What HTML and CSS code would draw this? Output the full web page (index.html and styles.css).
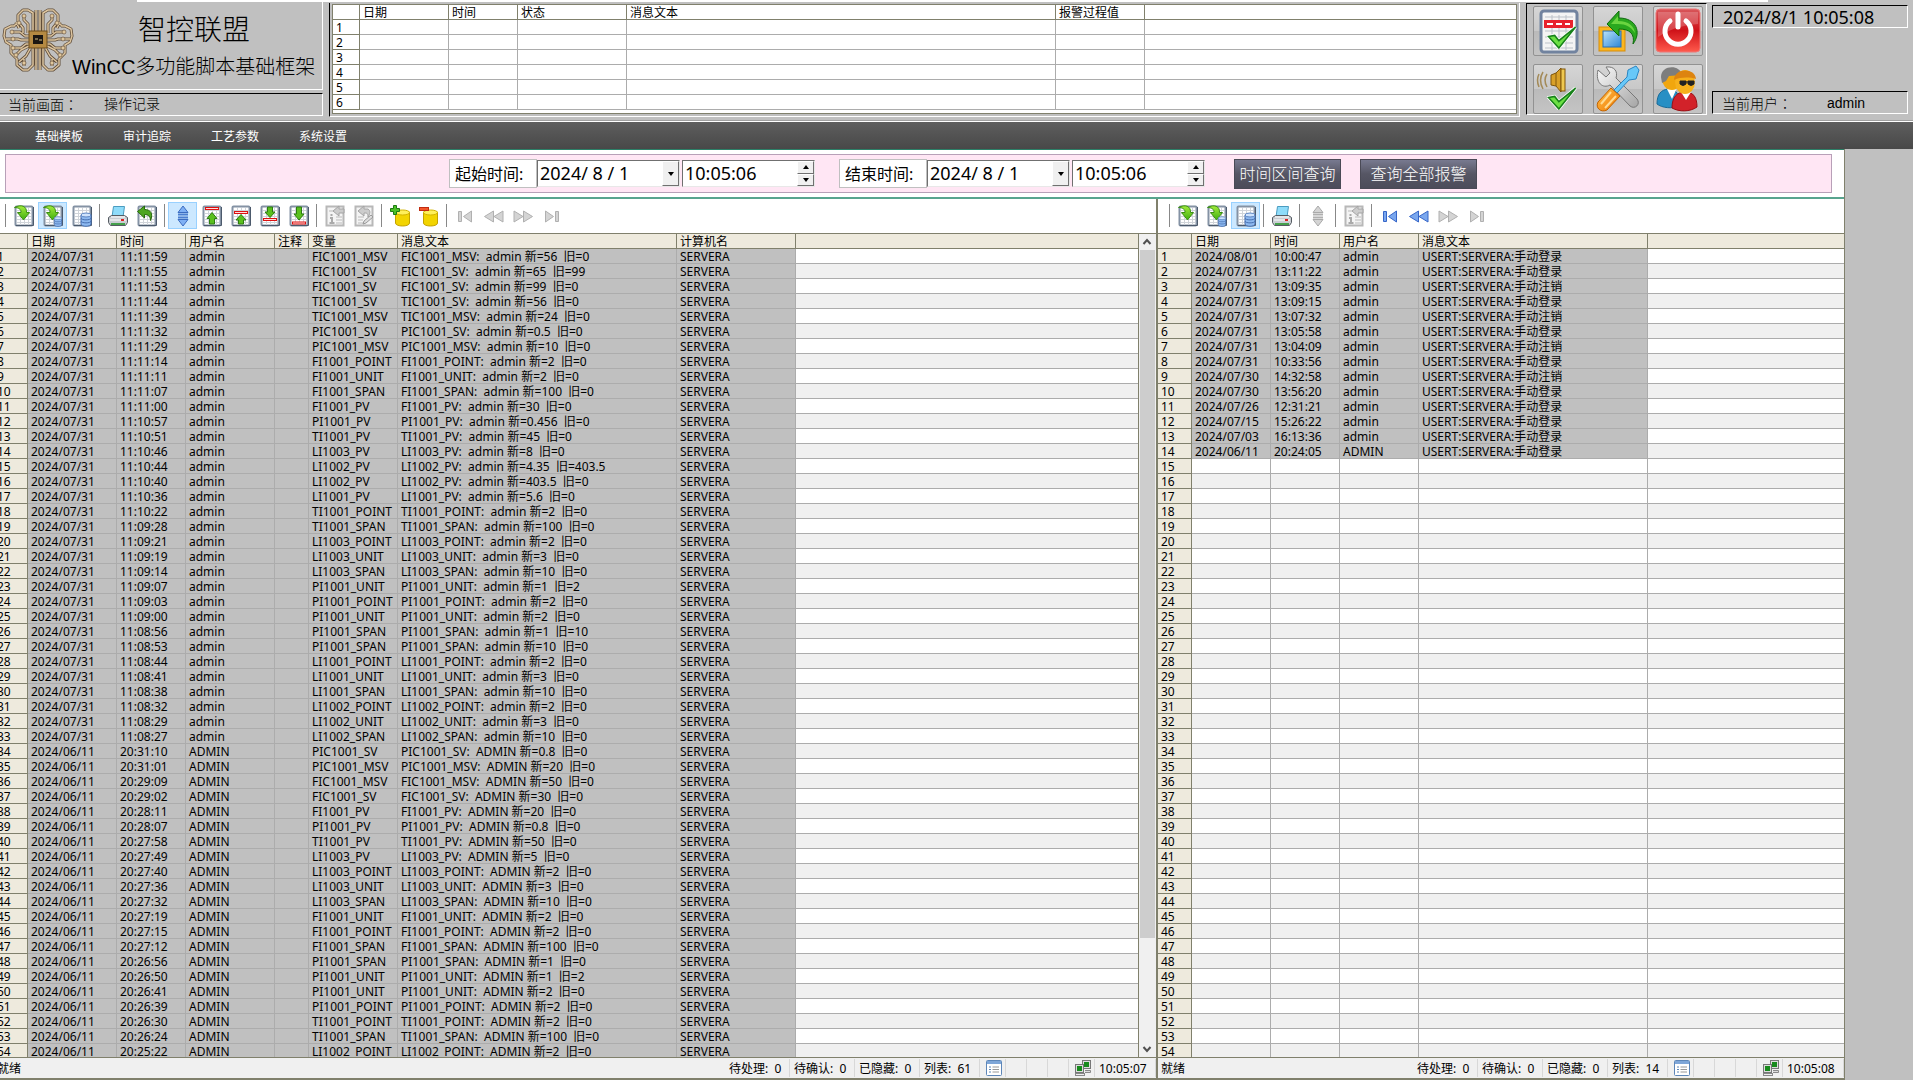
FILE: index.html
```html
<!DOCTYPE html>
<html lang="zh-CN">
<head>
<meta charset="UTF-8">
<title>操作记录</title>
<link rel="stylesheet" href="styles.css">
</head>
<body>

<svg class="defs" width="0" height="0" aria-hidden="true">
    <defs>
        <linearGradient id="g-green" x1="0" y1="0" x2="0" y2="1">
            <stop offset="0" stop-color="#a4ec3c"/><stop offset="1" stop-color="#3fae10"/>
        </linearGradient>
        <linearGradient id="g-red" x1="0" y1="0" x2="0" y2="1">
            <stop offset="0" stop-color="#d8575b"/><stop offset=".5" stop-color="#cf1219"/><stop offset="1" stop-color="#ff5a4c"/>
        </linearGradient>
        <linearGradient id="g-blue" x1="0" y1="0" x2="1" y2="1">
            <stop offset="0" stop-color="#b9e2fb"/><stop offset="1" stop-color="#2c87d6"/>
        </linearGradient>
        <linearGradient id="g-orange" x1="0" y1="0" x2="1" y2="1">
            <stop offset="0" stop-color="#ffc04a"/><stop offset="1" stop-color="#f07800"/>
        </linearGradient>
        <linearGradient id="g-steel" x1="0" y1="0" x2="1" y2="1">
            <stop offset="0" stop-color="#fafafa"/><stop offset="1" stop-color="#a5a5a5"/>
        </linearGradient>
    </defs>

    <symbol id="sheet" viewBox="0 0 20 22">
        <rect x="1.500" y="1.500" width="17" height="19" rx="1" fill="#fff" stroke="#8492a4" stroke-width="2"/>
        <path d="M3 5.500h14M3 8.500h14M3 11.500h14M3 14.500h14M3 17.500h14M6.500 3v17M10.500 3v17M14.500 3v17" stroke="#d0d4d9" fill="none"/>
        <path d="M2 20.500h17.500V2" stroke="#4c5a6c" fill="none"/>
    </symbol>
    <symbol id="db" viewBox="0 0 12 15">
        <path d="M1 3v9c0 3 10 3 10 0V3z" fill="#8db9f0" stroke="#466fb0"/>
        <path d="M1 6c0 2.500 10 2.500 10 0M1 9c0 2.500 10 2.500 10 0" fill="none" stroke="#466fb0"/>
        <ellipse cx="6" cy="3" rx="5" ry="2" fill="#cfe3fc" stroke="#5d86c4"/>
    </symbol>
    <symbol id="curve" viewBox="0 0 16 16">
        <path d="M.5 2.500C7-1 13 1 12.500 7.500h3L9.500 15 3.500 7.500H7C7.500 4.500 4.500 2.500.5 2.500z" fill="url(#g-green)" stroke="#3b8f14"/>
    </symbol>
    <symbol id="i-open" viewBox="0 0 20 22">
        <use href="#sheet"/><use href="#curve" x="0" y="0" width="16" height="16"/>
    </symbol>
    <symbol id="i-short" viewBox="0 0 20 22">
        <use href="#sheet"/><use href="#curve" x="0" y="0" width="16" height="16"/><use href="#db" x="10" y="11" width="10" height="11"/>
    </symbol>
    <symbol id="i-long" viewBox="0 0 20 22">
        <use href="#sheet"/><use href="#db" x="8" y="7" width="12" height="15"/>
    </symbol>
    <symbol id="i-print" viewBox="0 0 20 22">
        <path d="M4 12L5.500 1.500h11L15 12z" fill="#8fdcfa" stroke="#4b9cc0"/>
        <path d="M.5 12.500l3-2h13l3 2v5l-2 3H2.500l-2-3z" fill="#c9cdd2" stroke="#555b62"/>
        <path d="M3 12h14M2 15h16" stroke="#fff"/><path d="M3 19h14" stroke="#45a04c" stroke-width="2"/>
        <rect x="13" y="14" width="3" height="2" fill="#d22"/>
    </symbol>
    <symbol id="i-back" viewBox="0 0 20 22">
        <use href="#sheet"/><path d="M.5 6.500l7-5.500v3.500c6 0 9 4 6 11 0-4-2-6-6-6V13z" fill="#4ea622" stroke="#276a0b"/>
    </symbol>
    <symbol id="i-scroll" viewBox="0 0 20 22">
        <path d="M10 1l5 6.500H5zM10 21l5-6.500H5z" fill="#7fb0f4" stroke="#3c6cc0"/><path d="M5 9.500h10M5 12.500h10" stroke="#4c7fd0" stroke-width="2"/>
    </symbol>
    <symbol id="i-scroll-off" viewBox="0 0 20 22">
        <path d="M10 1l5 6.500H5zM10 21l5-6.500H5z" fill="#d4d4d4" stroke="#aaa"/><path d="M5 9.500h10M5 12.500h10" stroke="#b0b0b0" stroke-width="2"/>
    </symbol>
    <symbol id="i-first" viewBox="0 0 20 22">
        <use href="#sheet"/><rect x="3.500" y="2.500" width="13" height="2" fill="#fdd" stroke="#d11"/>
        <path d="M10 7.500l5 6h-2.500V19h-5v-5.500H5z" fill="#5bc01e" stroke="#2c7c10"/>
    </symbol>
    <symbol id="i-prev" viewBox="0 0 20 22">
        <use href="#sheet"/><rect x="3.500" y="6.500" width="13" height="2" fill="#fdd" stroke="#d11"/>
        <path d="M10 9.500l5 5.500h-2.500v4h-5v-4H5z" fill="#5bc01e" stroke="#2c7c10"/>
    </symbol>
    <symbol id="i-next" viewBox="0 0 20 22">
        <use href="#sheet"/><rect x="3.500" y="13.500" width="13" height="2" fill="#fdd" stroke="#d11"/>
        <path d="M10 12.500l5-5.500h-2.500V2h-5v5H5z" fill="#5bc01e" stroke="#2c7c10"/>
    </symbol>
    <symbol id="i-last" viewBox="0 0 20 22">
        <use href="#sheet"/><rect x="3.500" y="17" width="13" height="2" fill="#fdd" stroke="#d11"/>
        <path d="M10 15l5-6h-2.500V2h-5v7H5z" fill="#5bc01e" stroke="#2c7c10"/>
    </symbol>
    <symbol id="i-info" viewBox="0 0 20 22">
        <rect x="1.500" y="1.500" width="17" height="19" fill="#f4f4f4" stroke="#b8b8b8" stroke-width="2"/>
        <path d="M4 6h4M11 12h6M11 15h6M11 18h6" stroke="#bbb"/><path d="M6.500 9v2M5 13h2v5M4.500 18h5" stroke="#aaa" stroke-width="2" fill="none"/>
        <path d="M8 6l6-5v3h5v4h-5v3z" fill="#ccc" stroke="#a4a4a4"/>
    </symbol>
    <symbol id="i-edit" viewBox="0 0 20 22">
        <rect x="1.500" y="1.500" width="17" height="19" fill="#f4f4f4" stroke="#b8b8b8" stroke-width="2"/>
        <path d="M4 12h6M4 15h5M4 18h5" stroke="#bbb"/><path d="M4 6l6-5v3h4c3 2 2 5 0 8 0-4-1-4-4-4v3z" fill="#ccc" stroke="#a4a4a4"/>
        <path d="M9 19l1-3 7-6 2 2-7 6z" fill="#ddd" stroke="#999"/>
    </symbol>
    <symbol id="i-lock" viewBox="0 0 20 22">
        <path d="M5.500 7v11c0 4 14 4 14 0V7z" fill="#f2d400" stroke="#c4a200"/><ellipse cx="12.500" cy="7.500" rx="7" ry="2.500" fill="#fff05a" stroke="#d3b400"/>
        <path d="M3.500.5h3v3h3v3h-3v3h-3v-3h-3v-3h3z" fill="#4bc126" stroke="#1d7a12"/>
    </symbol>
    <symbol id="i-unlock" viewBox="0 0 20 22">
        <path d="M4.500 7v11c0 4 14 4 14 0V7z" fill="#f2d400" stroke="#c4a200"/><ellipse cx="11.500" cy="7.500" rx="7" ry="2.500" fill="#fff05a" stroke="#d3b400"/>
        <rect x=".5" y="2.500" width="9" height="3" fill="#f2552a" stroke="#c02c10"/>
    </symbol>
    <symbol id="n-first" viewBox="0 0 20 22"><path d="M3.500 6.500h3v10h-3zM16.500 6v11l-8-5.500z" stroke-linejoin="round"/></symbol>
    <symbol id="n-prev" viewBox="0 0 20 22"><path d="M9.500 6v11l-9-5.500zM19 6v11l-9-5.500z" stroke-linejoin="round"/></symbol>
    <symbol id="n-next" viewBox="0 0 20 22"><path d="M10.500 6v11l9-5.500zM1 6v11l9-5.500z" stroke-linejoin="round"/></symbol>
    <symbol id="n-last" viewBox="0 0 20 22"><path d="M16.500 6.500h-3v10h3zM3.500 6v11l8-5.500z" stroke-linejoin="round"/></symbol>
    <symbol id="s-list" viewBox="0 0 16 16">
        <rect x=".5" y=".5" width="15" height="15" rx="1" fill="#fff" stroke="#5d86b8"/><path d="M1 2.500h14" stroke="#7ea6d8" stroke-width="3"/>
        <path d="M3 7h2M3 9.500h2M3 12h2" stroke="#5d86b8"/><path d="M6.500 7H13M6.500 9.500H13M6.500 12H13" stroke="#999"/>
    </symbol>
    <symbol id="s-net" viewBox="0 0 16 16">
        <rect x="7.500" y=".5" width="8" height="8" fill="#ddd" stroke="#777"/><rect x="9" y="2" width="5" height="5" fill="#178a1c"/><path d="M10 10.500h5.500v2H10" fill="#ddd" stroke="#888"/>
        <rect x=".5" y="4.500" width="8" height="8" fill="#ddd" stroke="#777"/><rect x="2" y="6" width="5" height="5" fill="#178a1c"/><rect x=".5" y="13.500" width="9" height="2" fill="#eee" stroke="#888"/>
    </symbol>
    <symbol id="check" viewBox="0 0 28 22">
        <path d="M1 10l6-1 4 5L27 1 11 21z" fill="#5fe03c" stroke="#fff" stroke-width="3"/><path d="M1 10l6-1 4 5L27 1 11 21z" fill="#6be044" stroke="#17811a" stroke-width="1.500"/>
    </symbol>
</svg>

<header class="header">
    <section class="brand">
        <div class="brand-title">
            <svg class="logo" viewBox="0 0 72 64">
                <defs>
                    <path id="trace" d="M34 2v22M34 62V38M31 24V5l-5-3h-5l-5 5v7l-4 4M31 40v17l-5 5h-5l-6-5v-6l-6-6v-8l-5-3-2-6 1-7 6-3h4M17 20l-3-6M22 7v5l4 4v9M17 15l4 5v5M10 24h8l5 4h6M4 31h12l3 1h9M10 40h9l5-4h5M13 48l6-6 8-4M17 54l7-6 4-7M22 58v-7"/>
                </defs>
                <g id="lobe">
                    <g fill="none" stroke-linejoin="round">
                        <use href="#trace" stroke="#5f4c38" stroke-width="3"/>
                        <use href="#trace" stroke="#dcc49e" stroke-width="1.500"/>
                    </g>
                    <g fill="#e0c79c" stroke="#5f4c38" stroke-width=".6"><circle cx="22" cy="8" r="2"/><circle cx="17" cy="15" r="2"/><circle cx="10" cy="24" r="2"/><circle cx="11" cy="31" r="2"/><circle cx="11" cy="40" r="2"/><circle cx="14" cy="47" r="2"/><circle cx="22" cy="55" r="2"/></g>
                </g>
                <use href="#lobe" transform="matrix(-1 0 0 1 72 0)"/>
                <rect x="27" y="23" width="18" height="17" fill="#b58a42" stroke="#6c4c1c"/>
                <rect x="31" y="27" width="10" height="9" fill="#1b1712"/><path d="M33 31h3M37 32h3" stroke="#d9bf84"/>
            </svg>
            <div class="brand-text">
                <h1>智控联盟</h1>
                <h2>WinCC多功能脚本基础框架</h2>
            </div>
        </div>
        <div class="brand-page"><span>当前画面<span class="colon" lang="zh-TW">：</span></span><span>操作记录</span></div>
    </section>

    <section class="alarm">
        <div class="alarm-view">
            <table class="grid grid-alarm" id="alarm_table">
                <colgroup><col class="w27"><col class="w89"><col class="w69"><col class="w109"><col class="w429"><col class="w89"><col></colgroup>
                <thead><tr><th></th><th>日期</th><th>时间</th><th>状态</th><th>消息文本</th><th>报警过程值</th><th></th></tr></thead>
                <tbody></tbody>
            </table>
        </div>
    </section>

    <section class="tools">
        <button type="button" aria-label="报警确认"><svg viewBox="0 0 48 48">
            <rect x="7" y="4" width="36" height="41" rx="3" fill="#f4f4f4" stroke="#71839f" stroke-width="3"/>
            <path d="M11 10h28M11 24h28M11 30h28M11 36h28M11 41h28M18 8v35M25 8v35M32 8v35" stroke="#bcc2c9"/>
            <rect x="10" y="13" width="29" height="8" fill="#e8222c"/><path d="M13 17h23" stroke="#fff" stroke-width="2" stroke-dasharray="6 3"/>
            <use href="#check" x="13" y="19" width="30" height="23"/></svg></button>
        <button type="button" aria-label="返回"><svg viewBox="0 0 48 48">
            <rect x="5" y="20" width="26" height="24" fill="#fbb61e" stroke="#d78d0a"/><rect x="9" y="24" width="18" height="16" fill="url(#g-blue)" stroke="#2b6fb0"/>
            <path d="M13 17L25 4v7c17 0 23 14 14 26 2-10-3-15-14-15v7z" fill="#2aa81e" stroke="#0d6b0c"/><path d="M17 17l7-8v5c11 0 16 5 17 12-4-6-9-9-17-9z" fill="#6bd540"/></svg></button>
        <button type="button" aria-label="退出"><svg viewBox="0 0 48 48">
            <rect x="2" y="2" width="44" height="43" rx="4" fill="url(#g-red)" stroke="#e77"/><path d="M4 5h40v12Q22 18 4 30z" fill="#fff" opacity=".2"/>
            <path d="M16 14a13 13 0 1 0 16 0M24 7v13" fill="none" stroke="#fff" stroke-width="5" stroke-linecap="round"/></svg></button>
        <button type="button" aria-label="消音"><svg viewBox="0 0 48 48">
            <path d="M17 10l5-2 5-5v24l-5-6-5-1z" fill="#d8a028" stroke="#80560a"/><path d="M22 8v13" stroke="#80560a"/><rect x="27" y="4" width="4" height="22" fill="#efc850" stroke="#80560a"/>
            <path d="M13 9q-4 6 0 13M9 7q-5 8 0 17M5 9q-3 6 0 13" fill="none" stroke="#a38a58" stroke-width="1.500"/>
            <use href="#check" x="13" y="22" width="30" height="23"/></svg></button>
        <button type="button" aria-label="设置"><svg viewBox="0 0 48 48">
            <path d="M4 5l8 7 4-4-4-6c9-1 12 5 10 11l21 21c4 5-2 11-7 7L16 20C9 24 1 18 4 5z" fill="url(#g-steel)" stroke="#777"/>
            <path d="M20 25l13-13 1-7 8-4 3 4-3 9-7 1-12 13z" fill="#68c8f8" stroke="#2a86c4"/>
            <path d="M17 23l9 8-13 14c-6 3-12-2-9-8z" fill="url(#g-orange)" stroke="#c46400"/><path d="M17 27L7 39M22 31L11 43" stroke="#ffdb92" stroke-width="2"/></svg></button>
        <button type="button" aria-label="用户"><svg viewBox="0 0 48 48">
            <path d="M3 39c0-10 4-14 11-15 8 0 12 5 12 17-8 3-18 2-23-2z" fill="#278fc4" stroke="#186a98"/><path d="M13 24l5 10 5-11z" fill="#fff"/>
            <ellipse cx="18" cy="14" rx="10" ry="11" fill="#f1a60e"/><path d="M7 12C7 0 26-1 28 10l-13 1-3 5-4 2z" fill="#7d7d7d"/>
            <path d="M18 43c0-11 5-16 13-16 9 0 12 6 12 15-7 5-18 5-25 1z" fill="#d2222a" stroke="#9c1015"/><path d="M27 27l5 8 5-8z" fill="#fff"/>
            <ellipse cx="31" cy="17" rx="10" ry="12" fill="#f6b01c"/><path d="M20 15C20 3 41 2 42 14c-7-2-15-2-22 1z" fill="#dd8410"/>
            <path d="M26 16h6v3q-3 3-6 0zM34 16h6v3q-3 3-6 0zM31 17h4" fill="#222" stroke="#222"/></svg></button>
    </section>

    <section class="info">
        <div class="info-time">2024/8/1 10:05:08</div>
        <div class="info-user"><span>当前用户<span class="colon" lang="zh-TW">：</span></span><span>admin</span></div>
    </section>
</header>

<nav class="menu">
    <button type="button">基础模板</button>
    <button type="button">审计追踪</button>
    <button type="button">工艺参数</button>
    <button type="button">系统设置</button>
</nav>

<main class="main">
    <form class="query">
        <div class="query-panel">
            <div class="range">
                <label for="start_date">起始时间:</label>
                <div class="field date"><input id="start_date" type="text" value="2024/ 8 / 1"><button type="button" aria-label="选择日期"><i class="down"></i></button></div>
                <div class="field time"><input type="text" aria-label="起始时刻" value="10:05:06"><div class="spin"><button type="button" aria-label="增加"><i class="up"></i></button><button type="button" aria-label="减少"><i class="down"></i></button></div></div>
            </div>
            <div class="range">
                <label for="end_date">结束时间:</label>
                <div class="field date"><input id="end_date" type="text" value="2024/ 8 / 1"><button type="button" aria-label="选择日期"><i class="down"></i></button></div>
                <div class="field time"><input type="text" aria-label="结束时刻" value="10:05:06"><div class="spin"><button type="button" aria-label="增加"><i class="up"></i></button><button type="button" aria-label="减少"><i class="down"></i></button></div></div>
            </div>
            <button type="button" class="search">时间区间查询</button>
            <button type="button" class="search wide">查询全部报警</button>
        </div>
    </form>

    <div class="panels">
        <section class="panel panel-left">
            <div class="toolbar">
                <div class="group"><button type="button" aria-label="消息列表"><svg><use href="#i-open"/></svg></button><button type="button" class="active" aria-label="短期归档"><svg><use href="#i-short"/></svg></button><button type="button" aria-label="长期归档"><svg><use href="#i-long"/></svg></button></div>
                <div class="group"><button type="button" aria-label="打印"><svg><use href="#i-print"/></svg></button><button type="button" aria-label="返回"><svg><use href="#i-back"/></svg></button></div>
                <div class="group"><button type="button" class="active" aria-label="自动滚动"><svg><use href="#i-scroll"/></svg></button><button type="button" aria-label="第一条"><svg><use href="#i-first"/></svg></button><button type="button" aria-label="上一条"><svg><use href="#i-prev"/></svg></button><button type="button" aria-label="下一条"><svg><use href="#i-next"/></svg></button><button type="button" aria-label="最后一条"><svg><use href="#i-last"/></svg></button></div>
                <div class="group"><button type="button" disabled aria-label="信息"><svg><use href="#i-info"/></svg></button><button type="button" disabled aria-label="注释"><svg><use href="#i-edit"/></svg></button></div>
                <div class="group"><button type="button" aria-label="锁定"><svg><use href="#i-lock"/></svg></button><button type="button" aria-label="解锁"><svg><use href="#i-unlock"/></svg></button></div>
                <div class="group nav"><button type="button" disabled aria-label="首页"><svg><use href="#n-first"/></svg></button><button type="button" disabled aria-label="上一页"><svg><use href="#n-prev"/></svg></button><button type="button" disabled aria-label="下一页"><svg><use href="#n-next"/></svg></button><button type="button" disabled aria-label="末页"><svg><use href="#n-last"/></svg></button></div>
            </div>
            <div class="view">
                <div class="view-rows">
                    <table class="grid" id="operation_table">
                        <colgroup><col class="w34"><col class="w89"><col class="w69"><col class="w89"><col class="w34"><col class="w89"><col class="w279"><col class="w119"><col></colgroup>
                        <thead><tr><th></th><th>日期</th><th>时间</th><th>用户名</th><th>注释</th><th>变量</th><th>消息文本</th><th>计算机名</th><th></th></tr></thead>
                        <tbody></tbody>
                    </table>
                </div>
                <div class="scrollbar">
                    <svg viewBox="0 0 16 16"><path d="M4.500 10L8 6l3.500 4" fill="none" stroke="#505050" stroke-width="2"/></svg>
                    <div class="track"><div class="thumb"></div></div>
                    <svg viewBox="0 0 16 16"><path d="M4.500 6L8 10l3.500-4" fill="none" stroke="#505050" stroke-width="2"/></svg>
                </div>
            </div>
            <div class="status">
                <span class="ready">就绪</span><span class="c65">待处理:  0</span><span class="c65">待确认:  0</span><span class="c65">已隐藏:  0</span><span class="c60">列表:  61</span>
                <span class="c26"><svg><use href="#s-list"/></svg></span><span class="c21"></span><span class="c21"></span><span class="c21"></span><span class="c26"><svg><use href="#s-net"/></svg></span><span class="c61">10:05:07</span>
            </div>
        </section>

        <section class="panel panel-right">
            <div class="toolbar">
                <div class="group"><button type="button" aria-label="消息列表"><svg><use href="#i-open"/></svg></button><button type="button" aria-label="短期归档"><svg><use href="#i-short"/></svg></button><button type="button" class="active" aria-label="长期归档"><svg><use href="#i-long"/></svg></button></div>
                <div class="group"><button type="button" aria-label="打印"><svg><use href="#i-print"/></svg></button></div>
                <div class="group"><button type="button" disabled aria-label="自动滚动"><svg><use href="#i-scroll-off"/></svg></button></div>
                <div class="group"><button type="button" disabled aria-label="信息"><svg><use href="#i-info"/></svg></button></div>
                <div class="group nav"><button type="button" aria-label="首页"><svg><use href="#n-first"/></svg></button><button type="button" aria-label="上一页"><svg><use href="#n-prev"/></svg></button><button type="button" disabled aria-label="下一页"><svg><use href="#n-next"/></svg></button><button type="button" disabled aria-label="末页"><svg><use href="#n-last"/></svg></button></div>
            </div>
            <div class="view">
                <div class="view-rows">
                    <table class="grid" id="login_table">
                        <colgroup><col class="w34"><col class="w79"><col class="w69"><col class="w79"><col class="w229"><col></colgroup>
                        <thead><tr><th></th><th>日期</th><th>时间</th><th>用户名</th><th>消息文本</th><th></th></tr></thead>
                        <tbody></tbody>
                    </table>
                </div>
            </div>
            <div class="status">
                <span class="ready">就绪</span><span class="c65">待处理:  0</span><span class="c65">待确认:  0</span><span class="c65">已隐藏:  0</span><span class="c60">列表:  14</span>
                <span class="c26"><svg><use href="#s-list"/></svg></span><span class="c21"></span><span class="c21"></span><span class="c21"></span><span class="c26"><svg><use href="#s-net"/></svg></span><span class="c61">10:05:08</span>
            </div>
        </section>
    </div>
</main>

<script src="script.js"></script>
</body>
</html>
```

FILE: styles.css
```css
* {
    box-sizing: border-box;
}
body {
    margin: 0;
    height: 100vh;
    display: flex;
    flex-direction: column;
    overflow: hidden;
    background: #c0c0c0;
    color: #000;
    font-family: "Noto Sans", "Noto Sans CJK SC", sans-serif;
    font-size: 12px;
}
button {
    padding: 0;
    border: 0;
    background: none;
    font: inherit;
}
.defs {
    position: absolute;
}

/* header */
.header {
    position: relative;
    display: flex;
    flex: none;
    height: 122px;
    border-bottom: 1px solid #fff;
    box-shadow: inset 0 -1px #a0a0a0;
}
.header::before {
    content: "";
    position: absolute;
    top: 0;
    left: 137px;
    right: 145px;
    height: 2px;
    background: #fff;
}
.brand {
    width: 323px;
    padding-top: 2px;
    font-family: "Liberation Sans", "Noto Sans CJK SC", sans-serif;
}
.brand-title {
    display: flex;
    height: 88px;
    padding: 6px 0 0 2px;
    border-right: 1px solid #fff;
    border-bottom: 1px solid #fff;
}
.logo {
    width: 72px;
    height: 64px;
    margin-right: -2px;
    flex: none;
}
.brand-text {
    flex: 1;
}
.brand h1 {
    margin: 3px 0 0 66px;
    font-size: 28px;
    font-weight: 300;
    line-height: 40px;
}
.brand h2 {
    margin: 0;
    font-size: 20px;
    font-weight: 300;
    line-height: 32px;
    white-space: nowrap;
}
.brand-page {
    display: flex;
    gap: 26px;
    height: 23px;
    margin-top: 3px;
    padding-left: 8px;
    border-top: 1px solid #000;
    border-right: 1px solid #fff;
    border-bottom: 1px solid #fff;
    font-size: 14px;
    font-weight: 300;
    line-height: 20px;
}
.colon {
    font-family: "Noto Sans CJK TC", sans-serif;
}
.alarm {
    flex: 1;
    min-width: 0;
    height: 114px;
    margin: 3px 6px 0;
    padding: 1px 2px 2px;
    border: solid #fff;
    border-width: 0 1px 1px;
    border-left-color: #000;
}
.alarm-view {
    height: 110px;
    overflow: hidden;
    background: #fff;
    border: 1px solid #80806c;
}
.tools {
    display: grid;
    grid-template-columns: 50px 50px 50px;
    gap: 8px 10px;
    width: 181px;
    height: 112px;
    margin-top: 3px;
    padding: 2px 0 0 6px;
    border: 1px solid #fff;
    border-top-color: #000;
    border-left-color: #000;
}
.tools button {
    height: 50px;
    border: 1px solid #929292;
    border-radius: 2px;
    background: linear-gradient(#d6d6d6, #c8c8c8 50%, #bababa 50%, #c4c4c4);
}
.tools svg {
    display: block;
    width: 48px;
    height: 48px;
}
.info {
    display: flex;
    flex-direction: column;
    justify-content: space-between;
    width: 206px;
    height: 114px;
    padding: 5px 5px 0;
}
.info div {
    height: 23px;
    border: 1px solid #fff;
    border-top-color: #000;
    border-left-color: #000;
}
.info-time {
    padding-left: 10px;
    font-size: 18px;
    line-height: 22px;
}
.info-user {
    display: flex;
    gap: 35px;
    padding-left: 9px;
    font-family: "Liberation Sans", "Noto Sans CJK SC", sans-serif;
    font-size: 14px;
    font-weight: 300;
    line-height: 22px;
}

/* menu */
.menu {
    display: flex;
    flex: none;
    gap: 40px;
    height: 27px;
    padding-left: 35px;
    background: linear-gradient(#5e5e5e, #484848);
}
.menu button {
    color: #fff;
}

/* date query */
.main {
    flex: 1;
    min-height: 0;
    display: flex;
    flex-direction: column;
    margin-right: 68px;
    border-right: 1px solid #80806c;
}
.query {
    flex: none;
    height: 50px;
    padding: 4px 12px 4px 5px;
    background: #fff;
    border: solid #2c8068;
    border-width: 1px 0 2px;
    border-bottom-color: #58a48e;
}
.query-panel {
    display: flex;
    align-items: center;
    height: 39px;
    padding-left: 443px;
    border: 1px solid #b8a0b8;
    background: #ffe6f4;
}
.range {
    display: flex;
    align-items: center;
    margin-right: 24px;
}
.range label {
    width: 88px;
    height: 29px;
    padding-left: 5px;
    background: #fff;
    border: 1px solid #c0c0c0;
    font-size: 16px;
    line-height: 28px;
    white-space: nowrap;
}
.field {
    display: flex;
    height: 27px;
    background: #fff;
    border: 1px solid #e8e8e8;
    border-top-color: #707070;
    border-left-color: #707070;
}
.field input {
    flex: 1;
    min-width: 0;
    padding: 0 2px 2px;
    border: 0;
    outline: 0;
    background: none;
    color: #000;
    font-family: "Noto Sans", sans-serif;
    font-size: 18px;
}
.date {
    width: 143px;
    margin-right: 2px;
}
.time {
    width: 133px;
}
.field button {
    display: flex;
    align-items: center;
    justify-content: center;
    width: 17px;
    background: #f0f0f0;
    border: 1px solid #fff;
    border-right-color: #707070;
    border-bottom-color: #707070;
}
.spin {
    display: flex;
    flex-direction: column;
}
.spin button {
    flex: 1;
}
.up,
.down {
    border: 3px solid transparent;
}
.up {
    border-top: 0;
    border-bottom: 4px solid #000;
}
.down {
    border-bottom: 0;
    border-top: 4px solid #000;
}
.search {
    width: 107px;
    height: 30px;
    margin: 0 19px 0 5px;
    background: linear-gradient(#787a90, #565664 50%, #4c4c5a);
    border: 1px solid #4a4a56;
    color: #fff;
    font-size: 16px;
    font-weight: 300;
    line-height: 28px;
}
.wide {
    width: 117px;
    margin: 0;
}

/* list panels */
.panels {
    flex: 1;
    min-height: 0;
    display: grid;
    grid-template-columns: 1158fr 686fr;
    grid-template-rows: minmax(0, 1fr);
    overflow: hidden;
}
.panel {
    display: flex;
    flex-direction: column;
    min-width: 0;
    background: #fff;
    border-bottom: 2px solid #80806c;
}
/* the operation list starts a little outside of the window */
.panel-left {
    margin-left: -6px;
    border-right: 2px solid #80806c;
}
.toolbar {
    display: flex;
    flex: none;
    height: 34px;
    padding: 3px 0 0 8px;
}
.group {
    display: flex;
    height: 27px;
}
.group::before {
    content: "";
    width: 1px;
    margin: 2px 3px;
    background: #888;
}
.toolbar button {
    width: 29px;
    height: 27px;
    border: 1px solid transparent;
}
.toolbar .active {
    background: #cce8ff;
    border-color: #99d1ff;
}
.toolbar svg {
    display: block;
    width: 20px;
    height: 22px;
    margin: 0 auto;
}
.nav svg {
    fill: #7aa7ee;
    stroke: #3766c8;
}
.nav :disabled svg {
    fill: #d4d4d4;
    stroke: #b0b0b0;
}
.view {
    flex: 1;
    min-height: 0;
    display: flex;
    border: solid #80806c;
    border-width: 1px 0;
}
.view-rows {
    flex: 1;
    min-width: 0;
    overflow: hidden;
}
.scrollbar {
    display: flex;
    flex-direction: column;
    width: 18px;
    background: #f0f0f0;
    border-left: 1px solid #80806c;
}
.scrollbar svg {
    width: 16px;
    height: 16px;
}
.track {
    flex: 1;
}
.thumb {
    height: 87%;
    margin: 0 1px;
    background: #cdcdcd;
}

/* message grids */
.grid {
    width: 100%;
    table-layout: fixed;
    border-collapse: separate;
    border-spacing: 0;
}
.grid th,
.grid td {
    height: 15px;
    padding: 2px 0 0 3px;
    border-right: 1px solid #acacac;
    border-bottom: 1px solid #acacac;
    font-weight: 400;
    line-height: 12px;
    text-align: left;
    white-space: pre;
}
.grid th {
    background: #eeeadd;
    border-color: #80806c;
}
.grid th:last-child,
.grid td:last-child {
    border-right: 0;
}
.grid tbody tr:nth-child(even) {
    background: #f0f0f0;
}
.grid td.selected {
    background: #c0c0c0;
}
.grid-alarm th {
    background: #fff;
}
.grid-alarm tbody tr:nth-child(even) {
    background: #fff;
}
.w27 { width: 27px; }
.w34 { width: 34px; }
.w69 { width: 69px; }
.w79 { width: 79px; }
.w89 { width: 89px; }
.w109 { width: 109px; }
.w119 { width: 119px; }
.w229 { width: 229px; }
.w279 { width: 279px; }
.w429 { width: 429px; }

/* status bar */
.status {
    display: flex;
    flex: none;
    height: 20px;
    padding: 1px 0 1px 2px;
    background: #f0f0f0;
    line-height: 20px;
    white-space: pre;
}
.status span {
    flex: none;
    padding-left: 4px;
    border-right: 1px solid #d8d8d8;
}
.status .ready {
    flex: 1;
    padding-left: 1px;
    border: 0;
}
.status svg {
    display: block;
    width: 16px;
    height: 16px;
    margin: 1px 0 0 2px;
}
.c21 { width: 21px; }
.c26 { width: 26px; }
.c60 { width: 60px; }
.c61 { width: 61px; }
.c65 { width: 65px; }
```

FILE: script.js
```js
// time, variable, new value, old value
const operations = {
    "2024/07/31": ["admin", [
        ["11:11:59", "FIC1001_MSV", "56", "0"],
        ["11:11:55", "FIC1001_SV", "65", "99"],
        ["11:11:53", "FIC1001_SV", "99", "0"],
        ["11:11:44", "TIC1001_SV", "56", "0"],
        ["11:11:39", "TIC1001_MSV", "24", "0"],
        ["11:11:32", "PIC1001_SV", "0.5", "0"],
        ["11:11:29", "PIC1001_MSV", "10", "0"],
        ["11:11:14", "FI1001_POINT", "2", "0"],
        ["11:11:11", "FI1001_UNIT", "2", "0"],
        ["11:11:07", "FI1001_SPAN", "100", "0"],
        ["11:11:00", "FI1001_PV", "30", "0"],
        ["11:10:57", "PI1001_PV", "0.456", "0"],
        ["11:10:51", "TI1001_PV", "45", "0"],
        ["11:10:46", "LI1003_PV", "8", "0"],
        ["11:10:44", "LI1002_PV", "4.35", "403.5"],
        ["11:10:40", "LI1002_PV", "403.5", "0"],
        ["11:10:36", "LI1001_PV", "5.6", "0"],
        ["11:10:22", "TI1001_POINT", "2", "0"],
        ["11:09:28", "TI1001_SPAN", "100", "0"],
        ["11:09:21", "LI1003_POINT", "2", "0"],
        ["11:09:19", "LI1003_UNIT", "3", "0"],
        ["11:09:14", "LI1003_SPAN", "10", "0"],
        ["11:09:07", "PI1001_UNIT", "1", "2"],
        ["11:09:03", "PI1001_POINT", "2", "0"],
        ["11:09:00", "PI1001_UNIT", "2", "0"],
        ["11:08:56", "PI1001_SPAN", "1", "10"],
        ["11:08:53", "PI1001_SPAN", "10", "0"],
        ["11:08:44", "LI1001_POINT", "2", "0"],
        ["11:08:41", "LI1001_UNIT", "3", "0"],
        ["11:08:38", "LI1001_SPAN", "10", "0"],
        ["11:08:32", "LI1002_POINT", "2", "0"],
        ["11:08:29", "LI1002_UNIT", "3", "0"],
        ["11:08:27", "LI1002_SPAN", "10", "0"]
    ]],
    "2024/06/11": ["ADMIN", [
        ["20:31:10", "PIC1001_SV", "0.8", "0"],
        ["20:31:01", "PIC1001_MSV", "20", "0"],
        ["20:29:09", "FIC1001_MSV", "50", "0"],
        ["20:29:02", "FIC1001_SV", "30", "0"],
        ["20:28:11", "FI1001_PV", "20", "0"],
        ["20:28:07", "PI1001_PV", "0.8", "0"],
        ["20:27:58", "TI1001_PV", "50", "0"],
        ["20:27:49", "LI1003_PV", "5", "0"],
        ["20:27:40", "LI1003_POINT", "2", "0"],
        ["20:27:36", "LI1003_UNIT", "3", "0"],
        ["20:27:32", "LI1003_SPAN", "10", "0"],
        ["20:27:19", "FI1001_UNIT", "2", "0"],
        ["20:27:15", "FI1001_POINT", "2", "0"],
        ["20:27:12", "FI1001_SPAN", "100", "0"],
        ["20:26:56", "PI1001_SPAN", "1", "0"],
        ["20:26:50", "PI1001_UNIT", "1", "2"],
        ["20:26:41", "PI1001_UNIT", "2", "0"],
        ["20:26:39", "PI1001_POINT", "2", "0"],
        ["20:26:30", "TI1001_POINT", "2", "0"],
        ["20:26:24", "TI1001_SPAN", "100", "0"],
        ["20:25:22", "LI1002_POINT", "2", "0"]
    ]]
};

const logins = [
    ["2024/08/01", "10:00:47", "admin", "登录"],
    ["2024/07/31", "13:11:22", "admin", "登录"],
    ["2024/07/31", "13:09:35", "admin", "注销"],
    ["2024/07/31", "13:09:15", "admin", "登录"],
    ["2024/07/31", "13:07:32", "admin", "注销"],
    ["2024/07/31", "13:05:58", "admin", "登录"],
    ["2024/07/31", "13:04:09", "admin", "注销"],
    ["2024/07/31", "10:33:56", "admin", "登录"],
    ["2024/07/30", "14:32:58", "admin", "注销"],
    ["2024/07/30", "13:56:20", "admin", "登录"],
    ["2024/07/26", "12:31:21", "admin", "登录"],
    ["2024/07/15", "15:26:22", "admin", "登录"],
    ["2024/07/03", "16:13:36", "admin", "登录"],
    ["2024/06/11", "20:24:05", "ADMIN", "登录"]
];

// fills the table and adds empty numbered rows up to count
function fillTable(id, rows, count) {
    let table = document.getElementById(id);
    let columns = table.querySelectorAll("col").length;
    for (let i = 0; i < count; i++) {
        let tr = table.tBodies[0].insertRow();
        let th = document.createElement("th");
        th.textContent = i + 1;
        tr.appendChild(th);
        for (let c = 0; c < columns - 1; c++) {
            let td = tr.insertCell();
            if (rows[i] && c < columns - 2) {
                td.textContent = rows[i][c];
                td.className = "selected";
            }
        }
    }
}

let operationRows = [];
for (let date in operations) {
    let [user, items] = operations[date];
    for (let [time, name, value, old] of items) {
        operationRows.push([date, time, user, "", name, `${name}:  ${user} 新=${value}  旧=${old}`, "SERVERA"]);
    }
}

fillTable("alarm_table", [], 6);
fillTable("operation_table", operationRows, 54);
fillTable("login_table", logins.map(([date, time, user, action]) => [date, time, user, "USERT:SERVERA:手动" + action]), 54);
```
